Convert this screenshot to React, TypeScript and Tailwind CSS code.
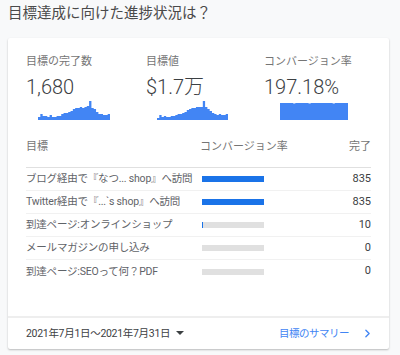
import { ChevronRight } from "lucide-react";

const spark1 = [3, 6, 4, 4, 3, 5, 3, 3, 4, 4, 6, 7, 7, 8, 9, 11, 12, 12, 13, 12, 13, 14, 19, 12, 11, 8, 6, 6, 5, 5, 6];
const spark2 = [2, 5, 3, 4, 3, 3, 4, 4, 5, 6, 6, 7, 8, 10, 11, 12, 12, 13, 13, 13, 19, 13, 11, 9, 7, 6, 5, 6, 5, 5, 6];
const spark3 = [17, 17, 17, 17, 17, 17, 16.5, 17, 17, 17, 17, 17, 17, 16.5, 17, 17, 17, 17, 17, 17, 17, 17, 17, 17, 16.5, 17, 17, 17, 17, 17, 17];

function Spark({ data, width, className }: { data: number[]; width: number; className?: string }) {
  const h = 20;
  const step = width / data.length;
  let d = `M0,${h}`;
  data.forEach((v, i) => {
    d += ` L${(i * step).toFixed(2)},${h - v} L${((i + 1) * step).toFixed(2)},${h - v}`;
  });
  d += ` L${width},${h} Z`;
  return (
    <svg width={width} height={h} className={className}>
      <path d={d} fill="#4285f4" />
    </svg>
  );
}

const metrics = [
  { label: "目標の完了数", value: "1,680", data: spark1, w: 72, col: "w-[120px]", off: "ml-[12px]" },
  { label: "目標値", value: "$1.7万", data: spark2, w: 71, col: "w-[118px]", off: "ml-[11px]" },
  { label: "コンバージョン率", value: "197.18%", data: spark3, w: 68, col: "w-[120px]", off: "ml-[16px]" },
];

const rows = [
  { name: "ブログ経由で『なつ... shop』へ訪問", pct: 100, count: "835" },
  { name: "Twitter経由で『...`s shop』へ訪問", pct: 100, count: "835" },
  { name: "到達ページ:オンラインショップ", pct: 2, count: "10" },
  { name: "メールマガジンの申し込み", pct: 0, count: "0" },
  { name: "到達ページ:SEOって何？PDF", pct: 0, count: "0" },
];

export default function App() {
  return (
    <div
      className="w-[400px] h-[355px] bg-[#f8f9fa] overflow-hidden"
      style={{ fontFamily: 'Roboto, "Noto Sans CJK JP", sans-serif' }}
    >
      <div className="h-[38px] pt-[4px] pl-[8px] text-[14.5px] leading-[20px] text-[#4a4a4a]">
        目標達成に向けた進捗状況は？
      </div>

      <div className="ml-[8px] w-[381px] h-[311px] bg-white rounded-[2px] shadow-[0_1px_2px_rgba(0,0,0,0.25)] flex flex-col">
        <div className="flex pl-[18px] pt-[16px]">
          {metrics.map((m) => (
            <div key={m.label} className={m.col}>
              <div className="text-[11px] leading-[16px] text-[#757575]">{m.label}</div>
              <div className="mt-[5px] text-[20px] leading-[24px] font-light text-[#3c4043]">{m.value}</div>
              <Spark data={m.data} width={m.w} className={`block mt-[1px] ${m.off}`} />
            </div>
          ))}
        </div>

        <div className="mx-[18px] mt-[19px] text-[11px]">
          <div className="flex leading-[16px] pb-[12px] border-b border-[#e0e0e0] text-[#757575]">
            <div className="w-[174px]">目標</div>
            <div className="flex-1">コンバージョン率</div>
            <div>完了</div>
          </div>
          {rows.map((r) => (
            <div key={r.name} className="flex items-center h-[23px] border-b border-[#f1f1f1] last:border-b-0 text-[#5f6368]">
              <div className="w-[176px] whitespace-nowrap text-[10.5px] tracking-[-0.2px]">{r.name}</div>
              <div className="w-[62px] h-[6px] bg-[#e0e0e0] flex">
                <div className="h-full bg-[#1a73e8]" style={{ width: r.pct === 2 ? "1px" : `${r.pct}%` }} />
              </div>
              <div className="flex-1 text-right text-[#3c4043]">{r.count}</div>
            </div>
          ))}
        </div>

        <div className="flex-1" />

        <div className="h-[33px] border-t-2 border-[#eeeeee] flex items-center justify-between pl-[18px] pr-[15px] text-[11px]">
          <div className="flex items-center text-[#3c4043]">
            <span className="text-[10.5px] tracking-[-0.3px]">2021年7月1日～2021年7月31日</span>
            <svg width="8" height="5" className="ml-[6px]">
              <path d="M0,0 L8,0 L4,4 Z" fill="#3c4043" />
            </svg>
          </div>
          <div className="flex items-center text-[#4285f4]">
            <span className="text-[10.5px] tracking-[-0.5px]">目標のサマリー</span>
            <ChevronRight className="w-[13px] h-[13px] ml-[12px]" strokeWidth={2.5} />
          </div>
        </div>
      </div>
    </div>
  );
}
